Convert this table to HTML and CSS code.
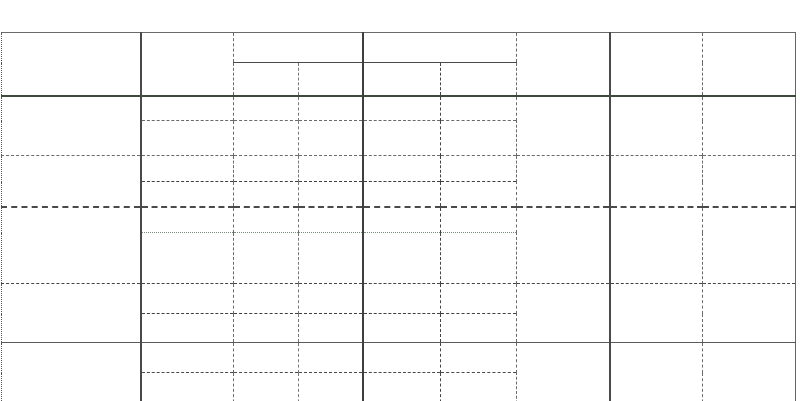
FILE: index.html
```html
<!DOCTYPE html>
<html lang="en">
<head>
    <meta charset="UTF-8">
    <meta name="viewport" content="width=device-width, initial-scale=1.0">
    <title>Grid</title>
    <link rel="stylesheet" href="styles.css">
</head>
<body>

    <table class="grid">
        <colgroup>
            <col class="w1"><col class="w2"><col class="w3"><col class="w4"><col class="w5">
            <col class="w6"><col class="w7"><col class="w8"><col class="w9">
        </colgroup>
        <thead>
            <tr class="h1">
                <th class="c1" rowspan="2"></th>
                <th class="c2" rowspan="2"></th>
                <th class="c3" colspan="2"></th>
                <th class="c5" colspan="2"></th>
                <th class="c7" rowspan="2"></th>
                <th class="c8" rowspan="2"></th>
                <th class="c9" rowspan="2"></th>
            </tr>
            <tr class="h2">
                <th class="c3"></th><th class="c4"></th><th class="c5"></th><th class="c6"></th>
            </tr>
        </thead>
        <tbody>
            <tr class="g1 ra">
                <td class="c1" rowspan="2"></td><td class="c2"></td><td class="c3"></td><td class="c4"></td><td class="c5"></td><td class="c6"></td>
                <td class="c7" rowspan="2"></td><td class="c8" rowspan="2"></td><td class="c9" rowspan="2"></td>
            </tr>
            <tr class="g1 rb">
                <td class="c2"></td><td class="c3"></td><td class="c4"></td><td class="c5"></td><td class="c6"></td>
            </tr>
            <tr class="g2 ra">
                <td class="c1" rowspan="2"></td><td class="c2"></td><td class="c3"></td><td class="c4"></td><td class="c5"></td><td class="c6"></td>
                <td class="c7" rowspan="2"></td><td class="c8" rowspan="2"></td><td class="c9" rowspan="2"></td>
            </tr>
            <tr class="g2 rb">
                <td class="c2"></td><td class="c3"></td><td class="c4"></td><td class="c5"></td><td class="c6"></td>
            </tr>
            <tr class="g3 ra">
                <td class="c1" rowspan="2"></td><td class="c2"></td><td class="c3"></td><td class="c4"></td><td class="c5"></td><td class="c6"></td>
                <td class="c7" rowspan="2"></td><td class="c8" rowspan="2"></td><td class="c9" rowspan="2"></td>
            </tr>
            <tr class="g3 rb">
                <td class="c2"></td><td class="c3"></td><td class="c4"></td><td class="c5"></td><td class="c6"></td>
            </tr>
            <tr class="g4 ra">
                <td class="c1" rowspan="2"></td><td class="c2"></td><td class="c3"></td><td class="c4"></td><td class="c5"></td><td class="c6"></td>
                <td class="c7" rowspan="2"></td><td class="c8" rowspan="2"></td><td class="c9" rowspan="2"></td>
            </tr>
            <tr class="g4 rb">
                <td class="c2"></td><td class="c3"></td><td class="c4"></td><td class="c5"></td><td class="c6"></td>
            </tr>
            <tr class="g5 ra">
                <td class="c1" rowspan="2"></td><td class="c2"></td><td class="c3"></td><td class="c4"></td><td class="c5"></td><td class="c6"></td>
                <td class="c7" rowspan="2"></td><td class="c8" rowspan="2"></td><td class="c9" rowspan="2"></td>
            </tr>
            <tr class="g5 rb">
                <td class="c2"></td><td class="c3"></td><td class="c4"></td><td class="c5"></td><td class="c6"></td>
            </tr>
        </tbody>
    </table>

</body>
</html>
```

FILE: styles.css
```css
/* Reset */
* {
    margin: 0;
    padding: 0;
    box-sizing: border-box;
    font-family: "Liberation Sans", Arial, sans-serif;
}

body {
    background: #ffffff;
    overflow: hidden;
}

/* Tabel */
.grid {
    margin: 32px 0 0 1px;
    width: 794px;
    table-layout: fixed;
    border-collapse: collapse;
    border-top: 1px solid #6a6a6a;
    border-left: 1px dotted #555555;
    border-right: 1px solid #666666;
}

.grid th,
.grid td {
    padding: 0;
}

.w1 { width: 139px; }
.w2 { width: 93px; }
.w3 { width: 65px; }
.w4 { width: 64px; }
.w5 { width: 78px; }
.w6 { width: 76px; }
.w7 { width: 93px; }
.w8 { width: 93px; }
.w9 { width: 93px; }

/* Garis vertikal */
.c2 { border-left: 2px solid #4a4a4a; }
.c3 { border-left: 1px dashed #6a6a6a; }
.c4 { border-left: 1px dashed #777777; }
.c5 { border-left: 2px solid #3f3f3f; }
.c6 { border-left: 1px dashed #444444; }
.c7 { border-left: 1px dashed #6a6a6a; }
.c8 { border-left: 2px solid #4a4a4a; }
.c9 { border-left: 1px dashed #6a6a6a; }

/* Tinggi baris */
.h1 { height: 30px; }
.h2 { height: 33px; }
.h2 th { border-top: 1px solid #4a4a4a; }

.g1.ra { height: 25px; }
.g1.rb { height: 35px; }
.g2.ra { height: 26px; }
.g2.rb { height: 25px; }
.g3.ra { height: 26px; }
.g3.rb { height: 51px; }
.g4.ra { height: 30px; }
.g4.rb { height: 29px; }
.g5.ra { height: 30px; }
.g5.rb { height: 40px; }

/* Garis horizontal */
.g1.ra td { border-top: 2px solid #3c4a3c; }
.g1.rb td { border-top: 1px dashed #6a6a6a; }
.g2.ra td { border-top: 1px dashed #6a6a6a; }
.g2.rb td { border-top: 1px dashed #3f3f3f; }
.g3.ra td { border-top: 2px dashed #4a4a4a; }
.g3.rb td { border-top: 1px dotted #7a8a7a; }
.g4.ra td { border-top: 1px dashed #444444; }
.g4.rb td { border-top: 1px dashed #3f3f3f; }
.g5.ra td { border-top: 1px solid #5a5a5a; }
.g5.rb td { border-top: 1px dashed #4a4a4a; }
```
